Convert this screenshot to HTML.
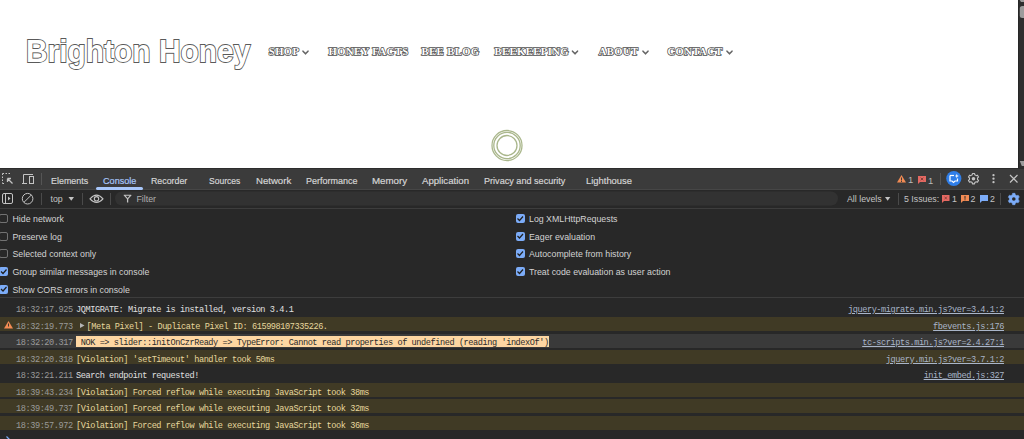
<!DOCTYPE html>
<html><head><meta charset="utf-8">
<style>
*{margin:0;padding:0;box-sizing:border-box}
html,body{width:1024px;height:439px;overflow:hidden;background:#282828;font-family:"Liberation Sans",sans-serif}
.a{position:absolute;white-space:pre}
#page{position:absolute;left:0;top:0;width:1024px;height:168px;background:#fff;overflow:hidden}
#logo{left:26px;top:34px;font-family:"Liberation Sans",sans-serif;font-weight:bold;font-size:32px;line-height:34px;color:#fff;-webkit-text-stroke:1.8px #5a5a5a;paint-order:stroke fill;transform:scaleX(0.935);transform-origin:0 0}
.nav{top:45px;font-family:"Liberation Serif",serif;font-weight:bold;font-size:10.6px;letter-spacing:0.45px;line-height:14px;color:#fff;-webkit-text-stroke:1.5px #505050;paint-order:stroke fill}
#sb{left:1018px;top:0;width:6px;height:168px;background:#2e2e2e}
#tb1{left:0;top:168px;width:1024px;height:22px;background:#3b3b3b;border-top:1px solid #2d2d2d;border-bottom:1px solid #464646}
#tb2{left:0;top:190px;width:1024px;height:19px;background:#282828;border-bottom:1px solid #3d3d3d}
.tab{top:174.9px;font-size:9.8px;line-height:12px;color:#d4d4d4;-webkit-text-stroke:0.2px currentColor;transform:scaleX(0.9);transform-origin:0 0}
.t2{font-size:8.8px;line-height:12px;color:#c4c4c4}
.set{font-size:8.8px;line-height:12px;color:#d3d3d3}
.cb{position:absolute;width:9px;height:9px;border-radius:2px}
.cb.off{border:1px solid #727272}
.cb.on{background:#7cacf8}
.row{position:absolute;left:0;width:1024px;height:14px}
.w{background:#403a25}
.g{background:#3a3a3a}
.m{font-family:"Liberation Mono",monospace;font-size:8.6px;letter-spacing:-0.43px;line-height:14px}
.ts{color:#9a9a9a}
.tx{color:#e0e0e0}
.wt{color:#e6d79e}
.lk{color:#a9b5c9;text-decoration:underline;text-underline-offset:1px}
.sep{position:absolute;width:1px;background:#5a5a5a}
svg{position:absolute;overflow:visible}
</style></head><body>
<div id="page">
  <div class="a" id="logo">Brighton Honey</div>
  <div class="a nav" style="left:268.8px">SHOP</div>
  <div class="a nav" style="left:328.5px">HONEY FACTS</div>
  <div class="a nav" style="left:421.5px">BEE BLOG</div>
  <div class="a nav" style="left:494.5px">BEEKEEPING</div>
  <div class="a nav" style="left:598.7px">ABOUT</div>
  <div class="a nav" style="left:667.5px">CONTACT</div>
  <svg style="left:0;top:0" width="1024" height="169">
    <g fill="none" stroke="#666" stroke-width="1.6" stroke-linecap="round" stroke-linejoin="round">
      <path d="M303 51.2 L305.5 53.8 L308 51.2"/>
      <path d="M572.5 51.2 L575 53.8 L577.5 51.2"/>
      <path d="M643 51.2 L645.5 53.8 L648 51.2"/>
      <path d="M727 51.2 L729.5 53.8 L732 51.2"/>
    </g>
    <g fill="none" stroke="#aab78c" stroke-width="1.3">
      <circle cx="507" cy="145.5" r="15"/>
      <circle cx="507" cy="145.5" r="13.2"/>
      <circle cx="507" cy="145.5" r="10"/>
    </g>
  </svg>
</div>
<div class="a" id="sb"></div>
<svg style="left:1018px;top:0" width="6" height="168">
  <rect x="0" y="0" width="1" height="168" fill="#262626"/>
  <path d="M1.8 0 H6 V2 H3 Z" fill="#9c9c9c"/>
  <rect x="1.8" y="6" width="7" height="12" rx="2.5" fill="#9c9c9c"/>
  <path d="M1.8 161 H10 L6 166 H3.8 Z" fill="#9c9c9c"/>
</svg>
<div class="a" id="tb1"></div>
<div class="a" id="tb2"></div>

<!-- toolbar 1 -->
<svg style="left:0;top:168px" width="1024" height="22">
  <g fill="none" stroke="#c4c4c4" stroke-width="1">
    <path d="M2.5 5.5h9M2.5 5.5v10M2.5 15.5h3" stroke-dasharray="1.5 1.5"/>
    <path d="M12.5 15.5 L7.5 10.5 M7.5 10.5 h3.5 M7.5 10.5 v3.5" stroke-width="1.3"/>
    <path d="M23.5 15.5 V6.5 H33 M22 15.5 H27"/>
    <rect x="29.5" y="8.5" width="4" height="7"/>
  </g>
  <rect x="41" y="5" width="1" height="12" fill="#555"/>
  <rect x="96" y="19" width="47" height="3" rx="1.5" fill="#a8c7fa"/>
  <rect x="940" y="5" width="1" height="12" fill="#555"/>
  <path d="M901.5 7 L906 14.5 H897 Z" fill="#f28b54"/>
  <rect x="901" y="9.5" width="1" height="3" fill="#3c3c3c"/>
  <rect x="901" y="13" width="1" height="1" fill="#3c3c3c"/>
  <path d="M918 8 H926 V14 H920 L918 16 Z" fill="#e46962"/>
  <path d="M920.7 9.7 L923.3 12.3 M923.3 9.7 L920.7 12.3" stroke="#7a3a36" stroke-width="0.9"/>
  <circle cx="953.8" cy="10.5" r="7.6" fill="#2f7ee8"/>
  <path d="M950 7.5 V13 H952 L953.5 14.5 L955 13 H957.5 V10.5" fill="none" stroke="#fff" stroke-width="1.2"/>
  <path d="M950 7.5 H954" stroke="#fff" stroke-width="1.2"/>
  <path d="M956.8 5.8 L957.4 7.4 L959 8 L957.4 8.6 L956.8 10.2 L956.2 8.6 L954.6 8 L956.2 7.4 Z" fill="#fff"/>
  <g transform="translate(973.5 10.7)" fill="none" stroke="#c4c4c4" stroke-width="1.1" stroke-linejoin="round">
    <path d="M-1.29 -3.89 L-1.07 -5.19 L1.07 -5.19 L1.29 -3.89 L2.73 -3.06 L3.96 -3.53 L5.03 -1.66 L4.01 -0.83 L4.01 0.83 L5.03 1.66 L3.96 3.53 L2.73 3.06 L1.29 3.89 L1.07 5.19 L-1.07 5.19 L-1.29 3.89 L-2.73 3.06 L-3.96 3.53 L-5.03 1.66 L-4.01 0.83 L-4.01 -0.83 L-5.03 -1.66 L-3.96 -3.53 L-2.73 -3.06 Z"/>
    <circle r="1.8" fill="#c4c4c4" stroke="none"/>
  </g>
  <g fill="#c4c4c4"><circle cx="993.5" cy="7.2" r="1.15"/><circle cx="993.5" cy="10.7" r="1.15"/><circle cx="993.5" cy="14.2" r="1.15"/></g>
  <path d="M1010 7 L1017.5 14.5 M1017.5 7 L1010 14.5" stroke="#c4c4c4" stroke-width="1.2"/>
</svg>
<div class="a tab" style="left:51px;transform:scaleX(0.91)">Elements</div>
<div class="a tab" style="left:102.5px;color:#a8c7fa;transform:scaleX(0.929)">Console</div>
<div class="a tab" style="left:150.5px;transform:scaleX(0.9)">Recorder</div>
<div class="a tab" style="left:209px;transform:scaleX(0.872)">Sources</div>
<div class="a tab" style="left:255.5px;transform:scaleX(0.98)">Network</div>
<div class="a tab" style="left:305.5px;transform:scaleX(0.918)">Performance</div>
<div class="a tab" style="left:372px;transform:scaleX(0.993)">Memory</div>
<div class="a tab" style="left:422px;transform:scaleX(0.981)">Application</div>
<div class="a tab" style="left:483.5px;transform:scaleX(0.928)">Privacy and security</div>
<div class="a tab" style="left:586px;transform:scaleX(0.96)">Lighthouse</div>
<div class="a t2" style="left:908px;top:173.5px;font-size:9.5px;color:#b8b8b8">1</div>
<div class="a t2" style="left:928px;top:174.5px;font-size:9.5px;color:#b8b8b8">1</div>

<!-- toolbar 2 -->
<svg style="left:0;top:189px" width="1024" height="20">
  <g fill="none" stroke="#c4c4c4" stroke-width="1">
    <rect x="2.5" y="4.5" width="10" height="10" rx="1.5"/>
    <path d="M5.5 4.5 V14.5"/>
    <circle cx="27.6" cy="9.7" r="5.3"/>
    <path d="M31.3 6 L23.9 13.4"/>
  </g>
  <path d="M8 7.5 L10.5 9.5 L8 11.5 Z" fill="#c4c4c4"/>
  <rect x="41" y="4" width="1" height="12" fill="#4a4a4a"/>
  <path d="M68.5 8 H74 L71.25 11.8 Z" fill="#c4c4c4"/>
  <rect x="82" y="4" width="1" height="12" fill="#4a4a4a"/>
  <g fill="none" stroke="#c4c4c4" stroke-width="1.1">
    <path d="M90 9.8 Q96.5 2.5 103 9.8 Q96.5 17 90 9.8 Z"/>
    <circle cx="96.5" cy="9.8" r="2.2"/>
  </g>
  <rect x="110" y="4" width="1" height="12" fill="#4a4a4a"/>
  <rect x="115" y="2.6" width="723" height="13.8" rx="6.9" fill="#323232"/>
  <path d="M124.2 6.2 H131 L127.6 9.8 Z" fill="none" stroke="#c4c4c4" stroke-width="1.1" stroke-linejoin="round"/><path d="M127.6 9.5 V13.5" stroke="#c4c4c4" stroke-width="1.3"/>
  <path d="M885 8 H890.3 L887.65 11.8 Z" fill="#c4c4c4"/>
  <rect x="898" y="4" width="1" height="12" fill="#4a4a4a"/>
  <path d="M942 6 H949.5 V12 H944 L942 14 Z" fill="#e46962"/>
  <path d="M944.6 7.7 L946.9 10.3 M946.9 7.7 L944.6 10.3" stroke="#7a3a36" stroke-width="0.8"/>
  <path d="M961 6 H969 V12 H963 L961 14 Z" fill="#f28b54"/>
  <rect x="964.5" y="7" width="1" height="2.8" fill="#282828"/><rect x="964.5" y="10.3" width="1" height="1" fill="#282828"/>
  <path d="M980 6 H988 V12 H982 L980 14 Z" fill="#7cacf8"/>
  <rect x="1000" y="4" width="1" height="12" fill="#4a4a4a"/>
  <g transform="translate(1013.8 10)">
    <path fill="#7cacf8" stroke="#7cacf8" stroke-width="0.6" stroke-linejoin="round" d="M-1.41 -4.27 L-1.18 -5.68 L1.18 -5.68 L1.41 -4.27 L2.99 -3.36 L4.33 -3.86 L5.51 -1.82 L4.41 -0.91 L4.41 0.91 L5.51 1.82 L4.33 3.86 L2.99 3.36 L1.41 4.27 L1.18 5.68 L-1.18 5.68 L-1.41 4.27 L-2.99 3.36 L-4.33 3.86 L-5.51 1.82 L-4.41 0.91 L-4.41 -0.91 L-5.51 -1.82 L-4.33 -3.86 L-2.99 -3.36 Z"/>
    <circle r="1.8" fill="#282828"/>
  </g>
</svg>
<div class="a t2" style="left:50.5px;top:193px">top</div>
<div class="a t2" style="left:136.5px;top:193px;color:#b0b0b0">Filter</div>
<div class="a t2" style="left:847px;top:193px">All levels</div>
<div class="a t2" style="left:904px;top:193px">5 Issues:</div>
<div class="a t2" style="left:952px;top:193px">1</div>
<div class="a t2" style="left:970.5px;top:193px">2</div>
<div class="a t2" style="left:990px;top:193px">2</div>

<!-- settings -->
<div class="cb off" style="left:-1px;top:214px"></div>
<div class="cb off" style="left:-1px;top:231.5px"></div>
<div class="cb off" style="left:-1px;top:249px"></div>
<div class="cb on" style="left:-1px;top:267px"></div>
<div class="cb on" style="left:-1px;top:284.5px"></div>
<div class="cb on" style="left:515.5px;top:214px"></div>
<div class="cb on" style="left:515.5px;top:231.5px"></div>
<div class="cb on" style="left:515.5px;top:249px"></div>
<div class="cb on" style="left:515.5px;top:267px"></div>
<svg style="left:0;top:0" width="1024" height="439">
  <g fill="none" stroke="#1f1f1f" stroke-width="1.2">
    <path d="M1 271.5 L3 273.5 L6.5 269.5"/>
    <path d="M1 289 L3 291 L6.5 287"/>
    <path d="M517.5 218.5 L519.5 220.5 L523 216.5"/>
    <path d="M517.5 236 L519.5 238 L523 234"/>
    <path d="M517.5 253.5 L519.5 255.5 L523 251.5"/>
    <path d="M517.5 271.5 L519.5 273.5 L523 269.5"/>
  </g>
</svg>
<div class="a set" style="left:12.5px;top:213px">Hide network</div>
<div class="a set" style="left:12.5px;top:230.5px">Preserve log</div>
<div class="a set" style="left:12.5px;top:248px">Selected context only</div>
<div class="a set" style="left:12.5px;top:266px">Group similar messages in console</div>
<div class="a set" style="left:12.5px;top:283.5px">Show CORS errors in console</div>
<div class="a set" style="left:529px;top:213px">Log XMLHttpRequests</div>
<div class="a set" style="left:529px;top:230.5px">Eager evaluation</div>
<div class="a set" style="left:529px;top:248px">Autocomplete from history</div>
<div class="a set" style="left:529px;top:266px">Treat code evaluation as user action</div>
<div class="a" style="left:0;top:297px;width:1024px;height:1px;background:#3d3d3d"></div>

<!-- console rows -->
<div class="row" style="top:300px"></div>
<div class="row w" style="top:317px"></div>
<div class="row g" style="top:334px"></div>
<div class="row w" style="top:350px"></div>
<div class="row" style="top:366px"></div>
<div class="row w" style="top:383px"></div>
<div class="row w" style="top:399px"></div>
<div class="row w" style="top:416px"></div>

<div class="a m ts" style="left:16px;top:303px">18:32:17.925</div>
<div class="a m tx" style="left:76px;top:303px">JQMIGRATE: Migrate is installed, version 3.4.1</div>
<div class="a m lk" style="right:20px;top:303px">jquery-migrate.min.js?ver=3.4.1:2</div>

<div class="a m ts" style="left:16px;top:320px">18:32:19.773</div>
<div class="a m wt" style="left:86.5px;top:320px">[Meta Pixel] - Duplicate Pixel ID: 615998107335226.</div>
<div class="a m lk" style="right:20px;top:320px">fbevents.js:176</div>

<div class="a m ts" style="left:16px;top:336px">18:32:20.317</div>
<div class="a m" style="left:76px;top:336px;height:11px;line-height:14px;background:#fdd6a2;color:#2a2a2a"> NOK =&gt; slider::initOnCzrReady =&gt; TypeError: Cannot read properties of undefined (reading 'indexOf')</div>
<div class="a m lk" style="right:20px;top:336px">tc-scripts.min.js?ver=2.4.27:1</div>

<div class="a m ts" style="left:16px;top:353px">18:32:20.318</div>
<div class="a m wt" style="left:76px;top:353px">[Violation] 'setTimeout' handler took 50ms</div>
<div class="a m lk" style="right:20px;top:353px">jquery.min.js?ver=3.7.1:2</div>

<div class="a m ts" style="left:16px;top:369px">18:32:21.211</div>
<div class="a m tx" style="left:76px;top:369px">Search endpoint requested!</div>
<div class="a m lk" style="right:20px;top:369px">init_embed.js:327</div>

<div class="a m ts" style="left:16px;top:386px">18:39:43.234</div>
<div class="a m wt" style="left:76px;top:386px">[Violation] Forced reflow while executing JavaScript took 38ms</div>
<div class="a m ts" style="left:16px;top:402px">18:39:49.737</div>
<div class="a m wt" style="left:76px;top:402px">[Violation] Forced reflow while executing JavaScript took 32ms</div>
<div class="a m ts" style="left:16px;top:419px">18:39:57.972</div>
<div class="a m wt" style="left:76px;top:419px">[Violation] Forced reflow while executing JavaScript took 36ms</div>

<svg style="left:0;top:300px" width="100" height="139">
  <path d="M8.5 21 L13 28.5 H4 Z" fill="#f28b54"/>
  <rect x="8" y="23.5" width="1" height="3" fill="#403a25"/>
  <path d="M80 23 L84.5 25.5 L80 28 Z" fill="#b5b5b5"/>
  <path d="M6.5 136.5 L9 139 L6.5 141.5" fill="none" stroke="#7cacf8" stroke-width="1.2"/>
</svg>
</body></html>
